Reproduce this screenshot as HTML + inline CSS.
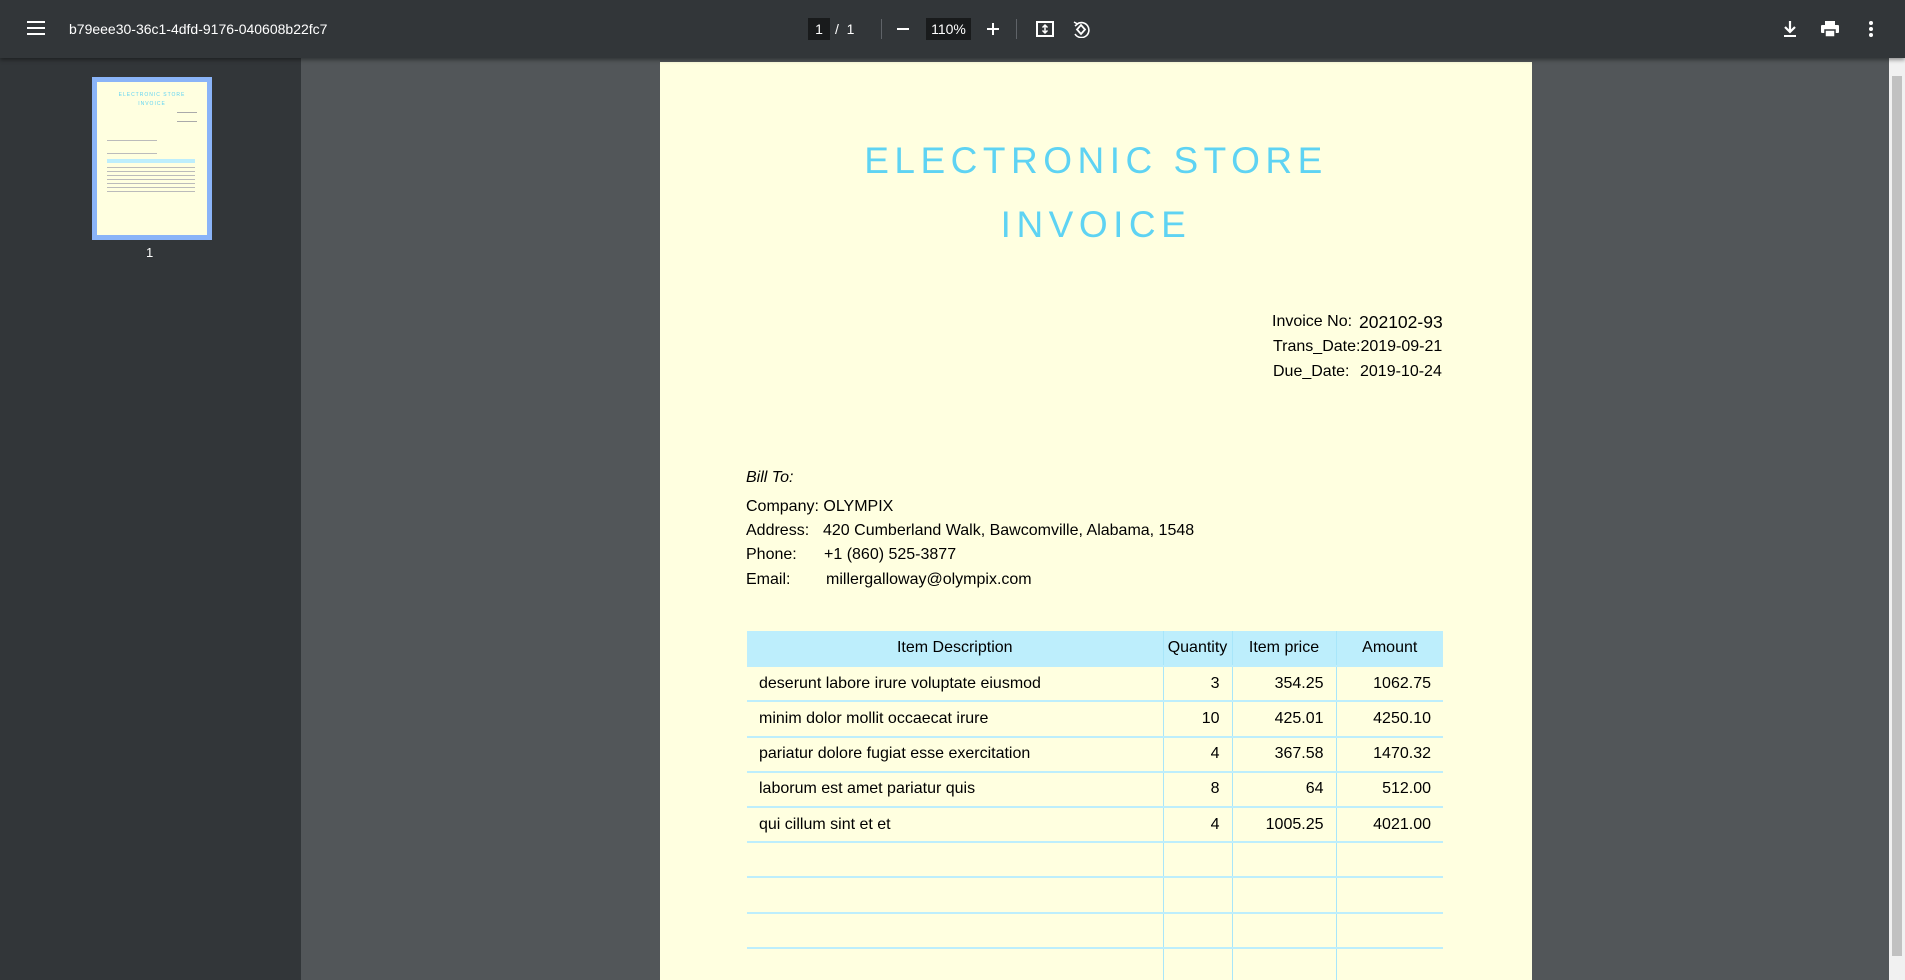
<!DOCTYPE html>
<html><head><meta charset="utf-8"><style>
*{margin:0;padding:0;box-sizing:border-box}
html,body{width:1905px;height:980px;overflow:hidden}
body{background:#525659;font-family:"Liberation Sans",sans-serif;position:relative}
.tb{position:absolute;left:0;top:0;width:1905px;height:58px;background:#323639;color:#fff;box-shadow:0 2px 4px rgba(0,0,0,.4);z-index:2}
.side{position:absolute;left:0;top:58px;width:301px;height:922px;background:#323639}
.a{position:absolute}
.page{position:absolute;left:660px;top:62px;width:872px;height:918px;background:#ffffe0;overflow:hidden}
.t{position:absolute;left:0;width:872px;text-align:center;color:#5ed3f3;font-size:37px;letter-spacing:5.5px}
.r{position:absolute;font-size:16px;color:#000;white-space:nowrap}
table{position:absolute;left:87px;top:569px;width:696px;border-collapse:collapse;font-size:16px}
td,th{height:35.2px;border-bottom:2px solid #bdeefc;padding:0 12px;font-weight:normal}
th{background:#bdeefc;text-align:center}
td.n{text-align:right}
td+td,th+th{border-left:1px solid #a8e6fa}
</style></head><body>
<div class="tb">
 <svg class="a" style="left:27px;top:21px" width="18" height="14"><rect y="0" width="18" height="2" fill="#fff"/><rect y="6" width="18" height="2" fill="#fff"/><rect y="12" width="18" height="2" fill="#fff"/></svg>
 <div class="a" style="left:69px;top:21px;font-size:14px">b79eee30-36c1-4dfd-9176-040608b22fc7</div>
 <div class="a" style="left:808px;top:18px;width:22px;height:22px;background:#191b1c;font-size:14px;text-align:center;line-height:22px">1</div>
 <div class="a" style="left:835px;top:21px;font-size:14px">/&nbsp;&nbsp;1</div>
 <div class="a" style="left:881px;top:19px;width:1px;height:20px;background:#5f6368"></div>
 <div class="a" style="left:897px;top:28px;width:12px;height:2px;background:#fff"></div>
 <div class="a" style="left:926px;top:18px;width:45px;height:22px;background:#191b1c;font-size:14px;text-align:center;line-height:22px">110%</div>
 <div class="a" style="left:987px;top:28px;width:12px;height:2px;background:#fff"></div>
 <div class="a" style="left:992px;top:23px;width:2px;height:12px;background:#fff"></div>
 <div class="a" style="left:1016px;top:19px;width:1px;height:20px;background:#5f6368"></div>
 <svg class="a" style="left:1036px;top:20px" width="18" height="18"><rect x="1" y="2" width="16" height="14" fill="none" stroke="#fff" stroke-width="2"/><path d="M9 5v8M6.5 7.5L9 5l2.5 2.5M6.5 10.5L9 13l2.5-2.5" stroke="#fff" fill="none" stroke-width="1.5"/></svg>
 <svg class="a" style="left:1072px;top:20px" width="18" height="18"><path d="M9 5L5 9.5l4 4.5 4-4.5z" fill="none" stroke="#fff" stroke-width="1.8"/><path d="M5 4A7.5 7.5 0 1 1 3 14" fill="none" stroke="#fff" stroke-width="1.6"/><path d="M2 2l3.5 2L3 6" fill="none" stroke="#fff" stroke-width="1.5"/></svg>
 <svg class="a" style="left:1782px;top:20px" width="16" height="18"><path d="M8 1v10M3 7l5 5 5-5" stroke="#fff" stroke-width="2.2" fill="none"/><rect x="2" y="15" width="12" height="2" fill="#fff"/></svg>
 <svg class="a" style="left:1820px;top:20px" width="20" height="18"><rect x="5" y="1" width="10" height="4" fill="#fff"/><rect x="1" y="5" width="18" height="8" rx="1" fill="#fff"/><rect x="5" y="10" width="10" height="7" fill="#fff" stroke="#323639" stroke-width="1.5"/></svg>
 <svg class="a" style="left:1868px;top:20px" width="6" height="18"><circle cx="3" cy="3" r="2" fill="#fff"/><circle cx="3" cy="9" r="2" fill="#fff"/><circle cx="3" cy="15" r="2" fill="#fff"/></svg>
</div>
<div class="side"></div>
<div class="a" style="left:92px;top:77px;width:120px;height:163px;background:#8ab4f8"></div>
<div class="a" style="left:97px;top:82px;width:110px;height:153px;background:#ffffe0">
 <div style="text-align:center;color:#5ed3f3;font-size:5px;letter-spacing:1px;margin-top:10px">ELECTRONIC STORE</div>
 <div style="text-align:center;color:#5ed3f3;font-size:5px;letter-spacing:1px;margin-top:3px">INVOICE</div>
 <div class="a" style="left:80px;top:30px;width:20px;height:10px;border-top:1px solid #aaa;border-bottom:1px solid #aaa"></div>
 <div class="a" style="left:10px;top:58px;width:50px;height:14px;border-top:1px solid #bbb;border-bottom:1px solid #bbb"></div>
 <div class="a" style="left:10px;top:77px;width:88px;height:4px;background:#bdeefc"></div>
 <div class="a" style="left:10px;top:82px;width:88px;height:30px;background:repeating-linear-gradient(#ffffe0 0 3px,#bbb 3px 4px)"></div>
</div>
<div class="a" style="left:146px;top:245px;color:#fff;font-size:13px">1</div>
<div class="a" style="left:1889px;top:58px;width:16px;height:922px;background:#f1f1f1"></div>
<div class="a" style="left:1892px;top:76px;width:10px;height:880px;background:#c1c1c1"></div>
<div class="page">
 <div class="t" style="top:78px">ELECTRONIC STORE</div>
 <div class="t" style="top:142px">INVOICE</div>
 <div class="r" style="left:612px;top:251px">Invoice No:</div><div class="r" style="left:699px;top:250px;font-size:17.5px">202102-93</div>
 <div class="r" style="left:613px;top:276px">Trans_Date:2019-09-21</div>
 <div class="r" style="left:613px;top:301px">Due_Date:</div><div class="r" style="left:700px;top:301px">2019-10-24</div>
 <div class="r" style="left:86px;top:407px;font-style:italic">Bill To:</div>
 <div class="r" style="left:86px;top:436px">Company: OLYMPIX</div>
 <div class="r" style="left:86px;top:460px">Address:</div><div class="r" style="left:163px;top:460px">420 Cumberland Walk, Bawcomville, Alabama, 1548</div>
 <div class="r" style="left:86px;top:484px">Phone:</div><div class="r" style="left:164px;top:484px">+1 (860) 525-3877</div>
 <div class="r" style="left:86px;top:509px">Email:</div><div class="r" style="left:166px;top:509px">millergalloway@olympix.com</div>
 <table>
  <tr><th style="width:416px">Item Description</th><th style="width:69px;padding:0 2px">Quantity</th><th style="width:104px">Item price</th><th>Amount</th></tr>
  <tr><td>deserunt labore irure voluptate eiusmod</td><td class="n">3</td><td class="n">354.25</td><td class="n">1062.75</td></tr>
  <tr><td>minim dolor mollit occaecat irure</td><td class="n">10</td><td class="n">425.01</td><td class="n">4250.10</td></tr>
  <tr><td>pariatur dolore fugiat esse exercitation</td><td class="n">4</td><td class="n">367.58</td><td class="n">1470.32</td></tr>
  <tr><td>laborum est amet pariatur quis</td><td class="n">8</td><td class="n">64</td><td class="n">512.00</td></tr>
  <tr><td>qui cillum sint et et</td><td class="n">4</td><td class="n">1005.25</td><td class="n">4021.00</td></tr>
  <tr><td></td><td></td><td></td><td></td></tr>
  <tr><td></td><td></td><td></td><td></td></tr>
  <tr><td></td><td></td><td></td><td></td></tr>
  <tr><td></td><td></td><td></td><td></td></tr>
 </table>
</div>
</body></html>
